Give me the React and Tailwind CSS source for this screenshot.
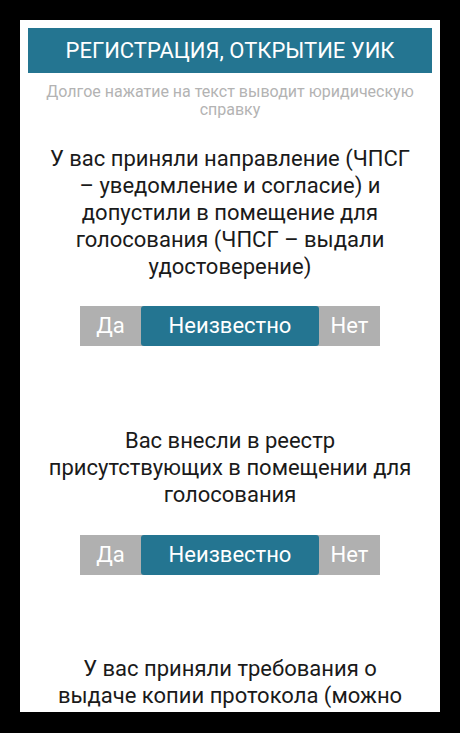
import React from "react";

function Toggle() {
  return (
    <div className="flex justify-center">
      <div className="flex h-[40px] w-[300px] bg-[#b0b0b0] text-[22px] leading-none text-white">
        <div className="flex w-[61px] items-center justify-center">Да</div>
        <div className="flex w-[178px] items-center justify-center rounded-[3px] bg-[#247591]">Неизвестно</div>
        <div className="flex w-[61px] items-center justify-center">Нет</div>
      </div>
    </div>
  );
}

export default function App() {
  return (
    <div className="h-[733px] w-[460px] overflow-hidden bg-black pt-[20px]" style={{ fontFamily: "Roboto, 'Noto Sans', sans-serif" }}>
      <div className="mx-[20px] h-[692px] overflow-hidden bg-white px-[8px] pt-[8px]">
        <div className="flex h-[45px] items-center justify-center bg-[#247591] text-[22px] text-white">
          РЕГИСТРАЦИЯ, ОТКРЫТИЕ УИК
        </div>
        <div className="mt-[10px] px-[4px] text-center text-[16px] leading-[18px] text-[#b3b3b3]">
          Долгое нажатие на текст выводит юридическую<br />справку
        </div>
        <div className="mt-[26px] text-center text-[22px] leading-[27px] text-[#1a1a1a]">
          У вас приняли направление (ЧПСГ<br />– уведомление и согласие) и<br />допустили в помещение для<br />голосования (ЧПСГ – выдали<br />удостоверение)
        </div>
        <div className="mt-[26px]"><Toggle /></div>
        <div className="mt-[81px] text-center text-[22px] leading-[27px] text-[#1a1a1a]">
          Вас внесли в реестр<br />присутствующих в помещении для<br />голосования
        </div>
        <div className="mt-[27px]"><Toggle /></div>
        <div className="mt-[80px] text-center text-[22px] leading-[27px] text-[#1a1a1a]">
          У вас приняли требования о<br />выдаче копии протокола (можно<br />требовать в любой момент)
        </div>
      </div>
    </div>
  );
}
